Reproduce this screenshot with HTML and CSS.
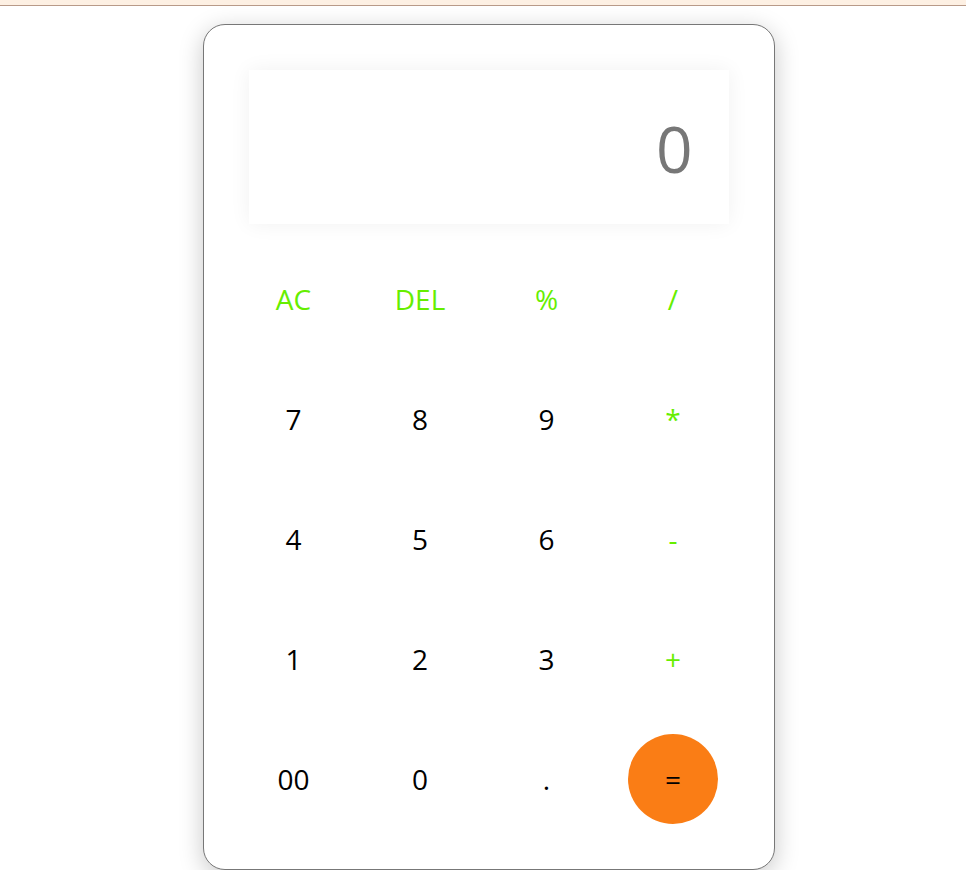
FILE: index.html
```html
<!DOCTYPE html>
<html>
<head>
<meta charset="utf-8">
<link rel="stylesheet" href="styles.css">
</head>
<body>
<div class="topbar"></div>
<div class="page">
  <div class="calc">
    <div class="display">0</div>
    <div class="keys">
      <button class="key op">AC</button>
      <button class="key op">DEL</button>
      <button class="key op">%</button>
      <button class="key op">/</button>
      <button class="key">7</button>
      <button class="key">8</button>
      <button class="key">9</button>
      <button class="key op">*</button>
      <button class="key">4</button>
      <button class="key">5</button>
      <button class="key">6</button>
      <button class="key op">-</button>
      <button class="key">1</button>
      <button class="key">2</button>
      <button class="key">3</button>
      <button class="key op">+</button>
      <button class="key">00</button>
      <button class="key">0</button>
      <button class="key">.</button>
      <button class="key equal">=</button>
    </div>
  </div>
</div>
</body>
</html>
```

FILE: styles.css
```css
* { box-sizing: border-box; }
html, body {
  margin: 0;
  padding: 0;
  background: #ffffff;
  font-family: "Open Sans", "Noto Sans", sans-serif;
}
.topbar {
  height: 6px;
  background: #fdf0e3;
  border-bottom: 1px solid #b89a88;
}
.page {
  display: flex;
  justify-content: center;
  padding: 18px 0 0 11px;
}
.calc {
  width: 572px;
  height: 846px;
  border: 1px solid #777777;
  border-radius: 22px;
  background: #ffffff;
  padding: 45px;
  box-shadow: 0 6px 24px rgba(0, 0, 0, 0.22);
}
.display {
  height: 154px;
  background: #ffffff;
  box-shadow: 0 0 20px rgba(0, 0, 0, 0.06);
  display: flex;
  align-items: center;
  justify-content: flex-end;
  padding-right: 36px;
  padding-top: 4px;
  font-size: 64px;
  color: #777777;
  line-height: 1;
}
.keys {
  margin-top: 30px;
  display: grid;
  grid-template-columns: repeat(4, 90px);
  column-gap: 36.5px;
  row-gap: 30px;
}
.key {
  width: 90px;
  height: 90px;
  border: none;
  border-radius: 50%;
  background: transparent;
  font-family: "Open Sans", "Noto Sans", sans-serif;
  font-size: 28px;
  color: #000000;
  padding: 0;
  display: flex;
  align-items: center;
  justify-content: center;
}
.key.op { color: #66ee00; }
.key.equal { background: #fa7d15; color: #000000; }
```
